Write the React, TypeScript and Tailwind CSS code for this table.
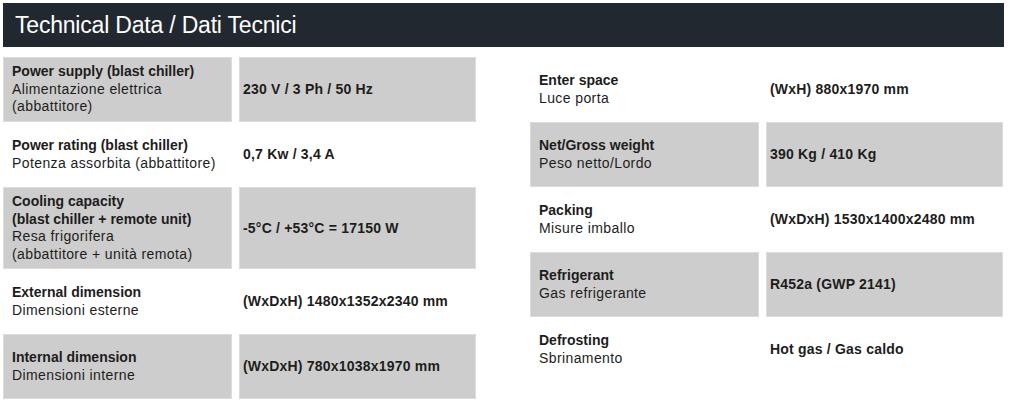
type Row = { en: string[]; it: string[]; value: string; shaded: boolean };

const LEFT: Row[] = [
  { en: ["Power supply (blast chiller)"], it: ["Alimentazione elettrica", "(abbattitore)"], value: "230 V / 3 Ph / 50 Hz", shaded: true },
  { en: ["Power rating (blast chiller)"], it: ["Potenza assorbita (abbattitore)"], value: "0,7 Kw / 3,4 A", shaded: false },
  {
    en: ["Cooling capacity", "(blast chiller + remote unit)"],
    it: ["Resa frigorifera", "(abbattitore + unità remota)"],
    value: "-5°C / +53°C = 17150 W",
    shaded: true,
  },
  { en: ["External dimension"], it: ["Dimensioni esterne"], value: "(WxDxH) 1480x1352x2340 mm", shaded: false },
  { en: ["Internal dimension"], it: ["Dimensioni interne"], value: "(WxDxH) 780x1038x1970 mm", shaded: true },
];

const RIGHT: Row[] = [
  { en: ["Enter space"], it: ["Luce porta"], value: "(WxH) 880x1970 mm", shaded: false },
  { en: ["Net/Gross weight"], it: ["Peso netto/Lordo"], value: "390 Kg / 410 Kg", shaded: true },
  { en: ["Packing"], it: ["Misure imballo"], value: "(WxDxH) 1530x1400x2480 mm", shaded: false },
  { en: ["Refrigerant"], it: ["Gas refrigerante"], value: "R452a (GWP 2141)", shaded: true },
  { en: ["Defrosting"], it: ["Sbrinamento"], value: "Hot gas / Gas caldo", shaded: false },
];

function DataTable({ rows }: { rows: Row[] }) {
  return (
    <div className="grid grid-cols-[229px_237px] gap-x-[7px]">
      {rows.map((r, i) => {
        const shade = r.shaded ? "bg-[#cdcdcd] border border-[#dcdcdc]" : "border border-transparent";
        return (
          <div key={i} className="contents">
            <div className={`flex min-h-[65px] flex-col justify-center py-[5px] pl-2 pr-2 leading-[17.5px] ${shade}`}>
              {r.en.map((t) => (
                <span key={t} className="font-bold">{t}</span>
              ))}
              {r.it.map((t) => (
                <span key={t} className="tracking-[0.4px]">{t}</span>
              ))}
            </div>
            <div className={`flex min-h-[65px] items-center pl-[3px] font-bold tracking-[0.2px] ${shade}`}>
              {r.value}
            </div>
          </div>
        );
      })}
    </div>
  );
}

export default function App() {
  return (
    <div className="h-[403px] w-[1010px] bg-white pt-[3px] pl-[3px] text-[14px] text-[#1d1d1b] [font-family:'Liberation_Sans',Arial,sans-serif]">
      <div className="flex h-[44px] w-[1001px] items-center bg-[#212830] pl-3 text-[23px] tracking-[-0.2px] text-white">
        Technical Data / Dati Tecnici
      </div>
      <div className="mt-[10px] flex items-start gap-[54px]">
        <DataTable rows={LEFT} />
        <DataTable rows={RIGHT} />
      </div>
    </div>
  );
}
